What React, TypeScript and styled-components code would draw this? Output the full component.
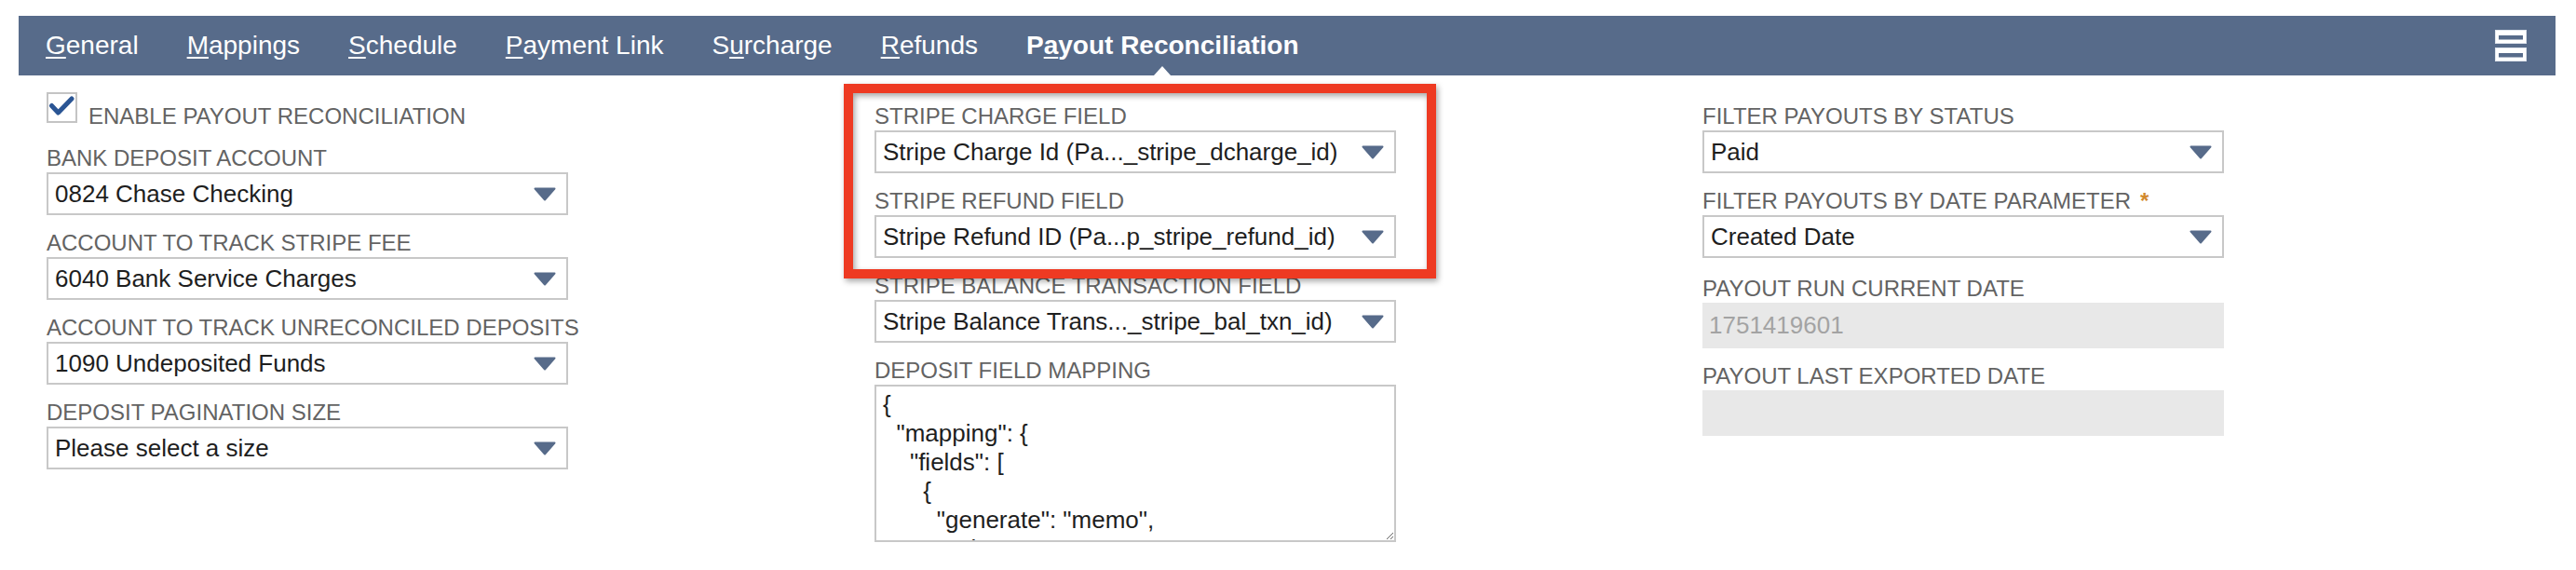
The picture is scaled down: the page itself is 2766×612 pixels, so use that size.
import React from "react";
import styled, { createGlobalStyle, css } from "styled-components";

const GlobalStyle = createGlobalStyle`
  html, body { margin: 0; padding: 0; background: #ffffff; }
  body { font-family: "Liberation Sans", Arial, Helvetica, sans-serif; }
  * { box-sizing: border-box; }
`;

const BAR = "#576b8a";

const Page = styled.div`
  padding: 17px 22px 0 20px;
`;

const TabBar = styled.nav`
  height: 64px;
  background: ${BAR};
  display: flex;
  align-items: stretch;
  padding: 0 31px 0 29px;
`;

const TabList = styled.div`
  display: flex;
  align-items: stretch;
  gap: 52px;
`;

const Tab = styled.div<{ $active?: boolean }>`
  position: relative;
  display: flex;
  align-items: center;
  font-size: 28px;
  color: #ffffff;
  white-space: nowrap;
  font-weight: ${(p) => (p.$active ? 700 : 400)};
  u {
    text-decoration-thickness: 2px;
    text-underline-offset: 3px;
  }
  ${(p) =>
    p.$active &&
    css`
      &::after {
        content: "";
        position: absolute;
        bottom: 0;
        left: 50%;
        transform: translateX(-50%);
        border-left: 9px solid transparent;
        border-right: 9px solid transparent;
        border-bottom: 10px solid #ffffff;
      }
    `}
`;

const MenuButton = styled.div`
  margin-left: auto;
  display: flex;
  align-items: center;
`;

const Content = styled.div`
  display: grid;
  grid-template-columns: repeat(3, 889px);
  padding: 14px 0 0 30px;
`;

const Column = styled.div`
  position: relative;
  display: flex;
  flex-direction: column;
`;

const CheckRow = styled.div`
  margin-top: 4px;
  display: flex;
  align-items: flex-start;
  gap: 12px;
`;

const CheckBox = styled.div`
  width: 33px;
  height: 33px;
  border: 2px solid #c4c4c4;
  background: #ffffff;
  display: flex;
  align-items: center;
  justify-content: center;
`;

const CheckLabel = styled.div`
  margin-top: 12px;
  font-size: 24px;
  line-height: 28px;
  color: #636363;
  white-space: nowrap;
`;

const Field = styled.div<{ $gap?: number }>`
  margin-top: ${(p) => p.$gap ?? 16}px;
  display: flex;
  flex-direction: column;
`;

const Label = styled.div`
  font-size: 24px;
  line-height: 28px;
  color: #636363;
  margin-bottom: 1px;
  white-space: nowrap;
`;

const Required = styled.span`
  color: #d2892c;
  margin-left: 10px;
  font-weight: 700;
`;

const SelectBox = styled.div`
  width: 560px;
  height: 46px;
  border: 2px solid #c8c8c8;
  background: #ffffff;
  display: flex;
  align-items: center;
  justify-content: space-between;
  padding: 0 11px 0 7px;
  font-size: 26px;
  color: #1e1e1e;
  white-space: nowrap;
`;

const ReadOnlyBox = styled.div`
  width: 560px;
  height: 49px;
  background: #e8e8e8;
  display: flex;
  align-items: center;
  padding: 0 7px;
  font-size: 26px;
  color: #a3a3a3;
`;

const MappingArea = styled.textarea`
  width: 560px;
  height: 169px;
  border: 2px solid #c8c8c8;
  padding: 4px 7px;
  margin: 0;
  font-family: "Liberation Sans", Arial, Helvetica, sans-serif;
  font-size: 26px;
  line-height: 31px;
  color: #1e1e1e;
  background: #ffffff;
  overflow: hidden;
  resize: both;
  display: block;
  outline: none;
`;

const Highlight = styled.div`
  position: absolute;
  top: -5px;
  left: -33px;
  width: 636px;
  height: 209px;
  border: 10px solid #ee3a22;
  filter: drop-shadow(2px 3px 3px rgba(0, 0, 0, 0.35));
  pointer-events: none;
  z-index: 2;
`;

const Arrow = () => (
  <svg width="24" height="15" viewBox="0 0 24 15" aria-hidden="true">
    <path
      d="M1.5 1.5 H22.5 L12 13.5 Z"
      fill={BAR}
      stroke={BAR}
      strokeWidth="2"
      strokeLinejoin="round"
    />
  </svg>
);

const Select = ({ value }: { value: string }) => (
  <SelectBox>
    <span>{value}</span>
    <Arrow />
  </SelectBox>
);

const MenuIcon = () => (
  <svg width="34" height="34" viewBox="0 0 34 34" aria-hidden="true">
    <rect x="0.5" y="0.5" width="33" height="14" fill="#ffffff" stroke="#dfe4ec" />
    <rect x="4" y="6" width="26" height="4.5" fill={BAR} />
    <rect x="0.5" y="19.5" width="33" height="14" fill="#ffffff" stroke="#dfe4ec" />
    <rect x="4" y="25" width="26" height="4.5" fill={BAR} />
  </svg>
);

const CheckMark = () => (
  <svg width="29" height="29" viewBox="0 0 29 29" aria-hidden="true">
    <path
      d="M3.5 12.5 L10.5 20 L25 5"
      fill="none"
      stroke="#2a5594"
      strokeWidth="5"
      strokeLinecap="round"
      strokeLinejoin="round"
    />
  </svg>
);

const mappingText = `{
  "mapping": {
    "fields": [
      {
        "generate": "memo",
        "value": "",`;

export default function App() {
  return (
    <>
      <GlobalStyle />
      <Page>
        <TabBar>
          <TabList>
            <Tab><span><u>G</u>eneral</span></Tab>
            <Tab><span><u>M</u>appings</span></Tab>
            <Tab><span><u>S</u>chedule</span></Tab>
            <Tab><span><u>P</u>ayment Link</span></Tab>
            <Tab><span>S<u>u</u>rcharge</span></Tab>
            <Tab><span><u>R</u>efunds</span></Tab>
            <Tab $active><span>P<u>a</u>yout Reconciliation</span></Tab>
          </TabList>
          <MenuButton>
            <MenuIcon />
          </MenuButton>
        </TabBar>
        <Content>
          <Column>
            <CheckRow>
              <CheckBox>
                <CheckMark />
              </CheckBox>
              <CheckLabel>ENABLE PAYOUT RECONCILIATION</CheckLabel>
            </CheckRow>
            <Field $gap={17}>
              <Label>BANK DEPOSIT ACCOUNT</Label>
              <Select value="0824 Chase Checking" />
            </Field>
            <Field>
              <Label>ACCOUNT TO TRACK STRIPE FEE</Label>
              <Select value="6040 Bank Service Charges" />
            </Field>
            <Field>
              <Label>ACCOUNT TO TRACK UNRECONCILED DEPOSITS</Label>
              <Select value="1090 Undeposited Funds" />
            </Field>
            <Field>
              <Label>DEPOSIT PAGINATION SIZE</Label>
              <Select value="Please select a size" />
            </Field>
          </Column>
          <Column>
            <Highlight />
            <Field>
              <Label>STRIPE CHARGE FIELD</Label>
              <Select value="Stripe Charge Id (Pa..._stripe_dcharge_id)" />
            </Field>
            <Field>
              <Label>STRIPE REFUND FIELD</Label>
              <Select value="Stripe Refund ID (Pa...p_stripe_refund_id)" />
            </Field>
            <Field>
              <Label>STRIPE BALANCE TRANSACTION FIELD</Label>
              <Select value="Stripe Balance Trans..._stripe_bal_txn_id)" />
            </Field>
            <Field>
              <Label>DEPOSIT FIELD MAPPING</Label>
              <MappingArea readOnly value={mappingText} />
            </Field>
          </Column>
          <Column>
            <Field>
              <Label>FILTER PAYOUTS BY STATUS</Label>
              <Select value="Paid" />
            </Field>
            <Field>
              <Label>
                FILTER PAYOUTS BY DATE PARAMETER<Required>*</Required>
              </Label>
              <Select value="Created Date" />
            </Field>
            <Field $gap={19}>
              <Label>PAYOUT RUN CURRENT DATE</Label>
              <ReadOnlyBox>1751419601</ReadOnlyBox>
            </Field>
            <Field>
              <Label>PAYOUT LAST EXPORTED DATE</Label>
              <ReadOnlyBox />
            </Field>
          </Column>
        </Content>
      </Page>
    </>
  );
}
